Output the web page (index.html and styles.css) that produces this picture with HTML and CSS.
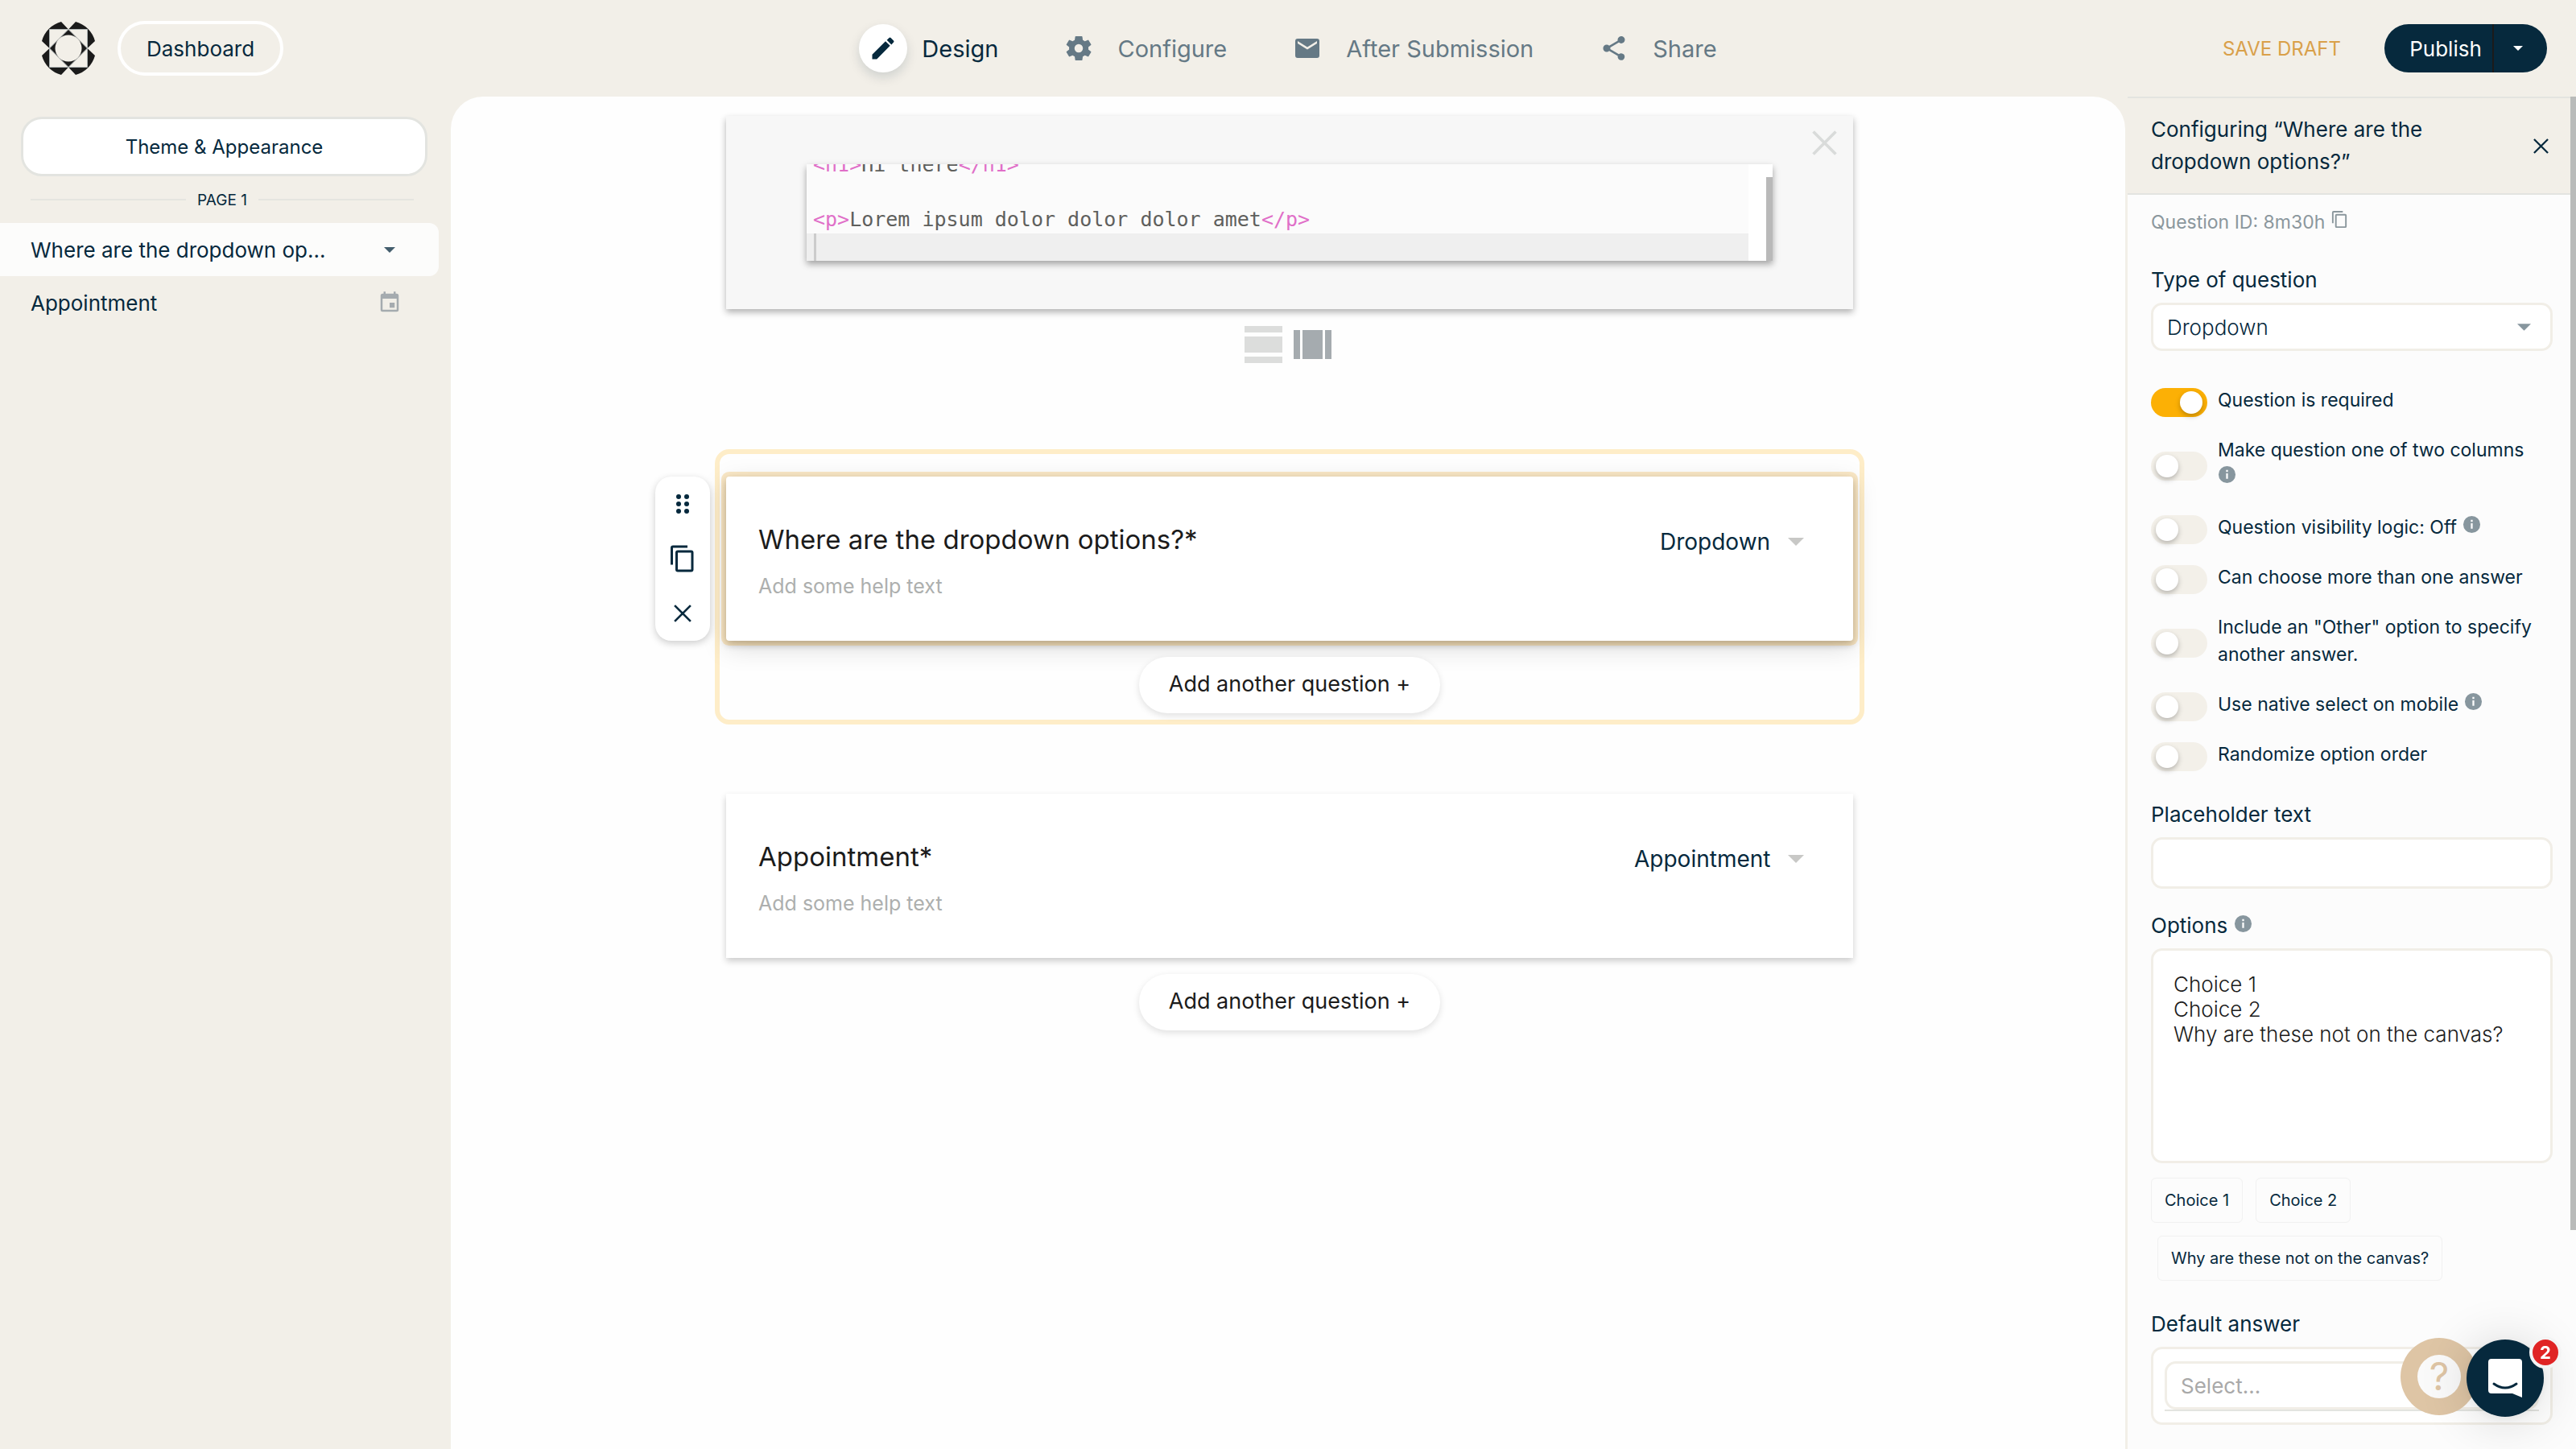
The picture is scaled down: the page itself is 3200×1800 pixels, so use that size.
FILE: index.html
```html
<!DOCTYPE html>
<html lang="en">
<head>
  <meta charset="UTF-8">
  <meta name="viewport" content="width=device-width, initial-scale=1.0">
  <title>Form Editor</title>
  <link rel="stylesheet" href="styles.css">
</head>
<body>
  <!-- shared icons -->
  <svg class="sprite" aria-hidden="true">
    <symbol id="caret" viewBox="0 0 20 10"><path d="M0 0h20L10 10z"/></symbol>
    <symbol id="info" viewBox="0 0 24 24"><path d="M12 1a11 11 0 1 0 0 22 11 11 0 0 0 0-22zm1.200 16.500h-2.400v-7h2.400zm0-9h-2.400V6h2.400z"/></symbol>
    <symbol id="copy" viewBox="0 0 24 24"><path d="M16 1H4a2 2 0 0 0-2 2v14h2V3h12zm3 4H8a2 2 0 0 0-2 2v14a2 2 0 0 0 2 2h11a2 2 0 0 0 2-2V7a2 2 0 0 0-2-2zm0 16H8V7h11z"/></symbol>
    <symbol id="cross" viewBox="0 0 20 20"><path d="M1 1l18 18M19 1L1 19" fill="none" stroke="currentColor" stroke-width="2.400"/></symbol>
  </svg>

  <header class="topbar">
    <div class="topbar-left">
      <svg class="logo" viewBox="0 0 66 66">
        <path d="M24 0L33 9.500 42 0A34 34 0 0 1 66 24L56.500 33 66 42A34 34 0 0 1 42 66L33 56.500 24 66A34 34 0 0 1 0 42L9.500 33 0 24A34 34 0 0 1 24 0z" fill="#1b1b1b"/>
        <path d="M9.500 9.500h47v47h-47z" fill="#f2efe8"/>
        <path d="M33 9.500L56.500 33 33 56.500 9.500 33z" fill="#1b1b1b"/>
        <path d="M9.500 9.500h47v47h-47zM33 9.500L56.500 33 33 56.500 9.500 33z" fill="none" stroke="#aeb4b4" stroke-width="1"/>
        <circle cx="33" cy="33" r="16.500" fill="#f2efe8"/>
      </svg>
      <button class="dashboard-btn">Dashboard</button>
    </div>
    <nav class="steps">
      <a href="#" class="step active">
        <span class="step-icon"><svg viewBox="0 0 24 24"><path d="M3 17.200V21h3.800L17.800 9.900l-3.800-3.800zM20.700 7a1 1 0 0 0 0-1.400l-2.300-2.300a1 1 0 0 0-1.400 0l-1.900 1.900 3.800 3.800z"/></svg></span>
        Design
      </a>
      <a href="#" class="step">
        <span class="step-icon"><svg viewBox="0 0 24 24"><path d="M20 13a8 8 0 0 0 0-2l2.100-1.600a.5.5 0 0 0 .1-.7l-2-3.400a.5.5 0 0 0-.6-.2l-2.500 1a7 7 0 0 0-1.700-1L15 2.400a.5.500 0 0 0-.5-.4h-4.900a.5.500 0 0 0-.5.400L8.700 5.100a7 7 0 0 0-1.700 1l-2.500-1a.5.500 0 0 0-.6.200l-2 3.400a.5.500 0 0 0 .1.700L4.100 11a8 8 0 0 0 0 2L2 14.600a.5.500 0 0 0-.1.700l2 3.400a.5.500 0 0 0 .6.200l2.500-1a7 7 0 0 0 1.700 1l.4 2.700c0 .2.200.4.500.4h4.900c.2 0 .4-.2.500-.4l.4-2.700a7 7 0 0 0 1.700-1l2.500 1c.2.100.5 0 .6-.2l2-3.400a.5.500 0 0 0-.1-.7zM12 15.500a3.500 3.500 0 1 1 0-7 3.500 3.500 0 0 1 0 7z"/></svg></span>
        Configure
      </a>
      <a href="#" class="step">
        <span class="step-icon"><svg viewBox="0 0 24 24"><path d="M20 4H4a2 2 0 0 0-2 2v12a2 2 0 0 0 2 2h16a2 2 0 0 0 2-2V6a2 2 0 0 0-2-2zm0 4l-8 5-8-5V6l8 5 8-5z"/></svg></span>
        After Submission
      </a>
      <a href="#" class="step">
        <span class="step-icon"><svg viewBox="0 0 24 24"><path d="M18 16.100c-.8 0-1.400.3-2 .8l-7.100-4.200a3 3 0 0 0 0-1.400L16 7.200A3 3 0 1 0 15 5c0 .2 0 .5.100.7L8 9.800a3 3 0 1 0 0 4.400l7.100 4.200a2.900 2.900 0 1 0 2.900-2.300z"/></svg></span>
        Share
      </a>
    </nav>
    <div class="topbar-right">
      <button class="draft-btn">SAVE DRAFT</button>
      <div class="publish">
        <button class="publish-btn">Publish</button>
        <button class="publish-more" aria-label="More publish options"><svg><use href="#caret"/></svg></button>
      </div>
    </div>
  </header>

  <main class="editor">
    <aside class="sidebar">
      <button class="theme-btn">Theme &amp; Appearance</button>
      <div class="page-divider">PAGE 1</div>
      <a href="#" class="page-item selected">
        <span>Where are the dropdown op...</span>
        <svg class="item-caret"><use href="#caret"/></svg>
      </a>
      <a href="#" class="page-item">
        <span>Appointment</span>
        <svg class="item-icon" viewBox="0 0 24 24"><path d="M17 12h-5v5h5zM16 1v2H8V1H6v2H5a2 2 0 0 0-2 2v14a2 2 0 0 0 2 2h14a2 2 0 0 0 2-2V5a2 2 0 0 0-2-2h-1V1zm3 18H5V8h14z"/></svg>
      </a>
    </aside>

    <section class="canvas">
      <div class="code-card">
        <button class="code-close" aria-label="Close"><svg><use href="#cross"/></svg></button>
        <div class="code-box">
          <pre class="code"><span class="tag">&lt;h1&gt;</span>Hi there<span class="tag">&lt;/h1&gt;</span>

<span class="tag">&lt;p&gt;</span>Lorem ipsum dolor dolor dolor amet<span class="tag">&lt;/p&gt;</span></pre>
          <div class="code-line"></div>
          <div class="code-scroll"></div>
        </div>
      </div>
      <div class="layouts">
        <button class="layout-btn rows" aria-label="Stacked"><i></i><i></i><i></i></button>
        <button class="layout-btn cols" aria-label="Full width"><i></i><i></i><i></i></button>
      </div>

      <div class="block active">
        <div class="tools">
          <button aria-label="Move"><svg class="dots" viewBox="0 0 16 24"><circle cx="3" cy="3" r="3"/><circle cx="13" cy="3" r="3"/><circle cx="3" cy="12" r="3"/><circle cx="13" cy="12" r="3"/><circle cx="3" cy="21" r="3"/><circle cx="13" cy="21" r="3"/></svg></button>
          <button aria-label="Duplicate"><svg class="copy"><use href="#copy"/></svg></button>
          <button aria-label="Delete"><svg class="cross"><use href="#cross"/></svg></button>
        </div>
        <article class="card">
          <div class="card-text">
            <h2>Where are the dropdown options?*</h2>
            <input type="text" placeholder="Add some help text" aria-label="Help text">
          </div>
          <label class="card-type">
            <select aria-label="Question type"><option>Dropdown</option></select>
            <svg><use href="#caret"/></svg>
          </label>
        </article>
        <button class="add-btn">Add another question +</button>
      </div>

      <div class="block">
        <article class="card">
          <div class="card-text">
            <h2>Appointment*</h2>
            <input type="text" placeholder="Add some help text" aria-label="Help text">
          </div>
          <label class="card-type">
            <select aria-label="Question type"><option>Appointment</option></select>
            <svg><use href="#caret"/></svg>
          </label>
        </article>
        <button class="add-btn">Add another question +</button>
      </div>
    </section>

    <aside class="panel">
      <div class="panel-head">
        <h1>Configuring “Where are the dropdown options?”</h1>
        <button class="panel-close" aria-label="Close"><svg><use href="#cross"/></svg></button>
      </div>
      <div class="panel-body">
        <p class="question-id">Question ID: 8m30h <svg><use href="#copy"/></svg></p>

        <label class="field-label" for="type">Type of question</label>
        <div class="select-wrap">
          <select id="type" class="field type-select"><option>Dropdown</option></select>
          <svg><use href="#caret"/></svg>
        </div>

        <div class="switches">
          <label class="switch"><input type="checkbox" checked><span>Question is required</span></label>
          <label class="switch"><input type="checkbox"><span>Make question one of two columns <svg class="info"><use href="#info"/></svg></span></label>
          <label class="switch"><input type="checkbox"><span>Question visibility logic: Off <svg class="info"><use href="#info"/></svg></span></label>
          <label class="switch"><input type="checkbox"><span>Can choose more than one answer</span></label>
          <label class="switch"><input type="checkbox"><span>Include an "Other" option to specify another answer.</span></label>
          <label class="switch"><input type="checkbox"><span>Use native select on mobile <svg class="info"><use href="#info"/></svg></span></label>
          <label class="switch"><input type="checkbox"><span>Randomize option order</span></label>
        </div>

        <label class="field-label" for="placeholder">Placeholder text</label>
        <input id="placeholder" class="field text-field" type="text">

        <label class="field-label" for="options">Options <svg class="info"><use href="#info"/></svg></label>
        <textarea id="options" class="field options-field">Choice 1
Choice 2
Why are these not on the canvas?</textarea>
        <div class="chips">
          <button>Choice 1</button>
          <button>Choice 2</button>
          <button class="long">Why are these not on the canvas?</button>
        </div>

        <label class="field-label" for="default">Default answer</label>
        <div class="field default-box">
          <div class="default-line">
            <select id="default" class="field default-select"><option>Select...</option></select>
          </div>
        </div>
      </div>
      <div class="scroll-thumb"></div>
    </aside>
  </main>

  <button class="help-btn" aria-label="Help"><span>?</span></button>
  <button class="chat-btn" aria-label="Messages">
    <svg viewBox="0 0 42 48"><path d="M4 0h34a4 4 0 0 1 4 4v44l-12-5H4a4 4 0 0 1-4-4V4a4 4 0 0 1 4-4z" fill="#fff"/><path d="M7 31q14 10 28 0" fill="none" stroke="#06293d" stroke-width="3" stroke-linecap="round"/></svg>
    <span class="badge">2</span>
  </button>
</body>
</html>
```
FILE: styles.css
```css
* {
  box-sizing: border-box;
}
body {
  margin: 0;
  height: 100vh;
  display: flex;
  flex-direction: column;
  overflow: hidden;
  background: #f2efe8;
  color: #06293d;
  font-family: Inter, sans-serif;
  font-size: 26px;
}
button, input, select, textarea {
  font: inherit;
  color: inherit;
  margin: 0;
}
button {
  border: none;
  background: none;
  padding: 0;
  cursor: pointer;
}
select {
  appearance: none;
}
a {
  color: inherit;
  text-decoration: none;
}
svg {
  fill: currentColor;
}
.sprite {
  display: none;
}

/* top bar */
.topbar {
  height: 120px;
  flex: none;
  display: grid;
  grid-template-columns: 1fr auto 1fr;
  align-items: center;
  padding: 0 36px;
}
.topbar-left {
  display: flex;
  align-items: center;
  gap: 28px;
  padding-left: 16px;
}
.logo {
  width: 66px;
  height: 66px;
}
.dashboard-btn {
  height: 68px;
  padding: 0 32px;
  border: 4px solid #fff;
  border-radius: 34px;
}
.steps {
  display: flex;
  gap: 70px;
  font-size: 29px;
}
.step {
  display: flex;
  align-items: center;
  gap: 18px;
  color: #657985;
}
.step-icon {
  width: 60px;
  height: 60px;
  border-radius: 50%;
  display: grid;
  place-items: center;
}
.step-icon svg {
  width: 36px;
  height: 36px;
}
.step.active {
  color: #06293d;
}
.step.active .step-icon {
  background: #fff;
  box-shadow: 0 6px 14px rgba(6, 41, 61, 0.15);
}
.topbar-right {
  display: flex;
  justify-content: flex-end;
  align-items: center;
  gap: 54px;
}
.draft-btn {
  color: #d9a04a;
  font-size: 24px;
}
.publish {
  display: flex;
  height: 60px;
  border-radius: 30px;
  overflow: hidden;
  background: #06293d;
  color: #fff;
}
.publish-btn {
  width: 136px;
  padding-left: 18px;
  border-right: 2px solid #1b1b1b;
}
.publish-more {
  width: 66px;
  padding-right: 6px;
}
.publish-more svg {
  width: 12px;
  height: 6px;
  display: block;
  margin: 0 auto;
}

/* three columns under the bar */
.editor {
  flex: 1;
  min-height: 0;
  display: grid;
  grid-template-columns: 560px 1fr 560px;
}

/* sidebar */
.sidebar {
  padding-top: 25px;
}
.theme-btn {
  display: block;
  width: 505px;
  height: 74px;
  margin-left: 26px;
  background: #fff;
  border: 3px solid #e3e4e0;
  border-radius: 26px;
  font-size: 24px;
}
.page-divider {
  display: flex;
  align-items: center;
  gap: 14px;
  height: 58px;
  padding: 0 46px 0 38px;
  font-size: 19px;
}
.page-divider::before, .page-divider::after {
  content: "";
  flex: 1;
  height: 2px;
  background: #e5e5e0;
}
.page-item {
  display: flex;
  align-items: center;
  justify-content: space-between;
  height: 66px;
  margin-right: 15px;
  padding: 0 48px 0 38px;
  border-radius: 0 12px 12px 0;
}
.page-item.selected {
  background: #fcfcfb;
}
.item-caret {
  width: 14px;
  height: 7px;
  margin-right: 6px;
  opacity: 0.75;
}
.item-icon {
  width: 30px;
  height: 30px;
  margin-right: -2px;
  color: #a5abaf;
}

/* canvas */
.canvas {
  min-width: 0;
  background: #fefefe;
  border-radius: 40px 40px 0 0;
  display: flex;
  flex-direction: column;
  align-items: center;
  padding: 24px 338px 0 342px;
}
.code-card {
  position: relative;
  width: 100%;
  height: 240px;
  padding: 60px 100px;
  background: #f7f7f7;
  box-shadow: 0 4px 8px rgba(0, 0, 0, 0.3);
}
.code-close {
  position: absolute;
  top: 18px;
  right: 20px;
  color: #d9dbda;
}
.code-close svg {
  width: 31px;
  height: 31px;
  display: block;
}
.code-box {
  position: relative;
  height: 120px;
  display: flex;
  flex-direction: column;
  justify-content: flex-end;
  overflow: hidden;
  background: #fbfbfb;
}
.code-box::after {
  content: "";
  position: absolute;
  top: 0;
  bottom: 0;
  right: 0;
  width: 30px;
  background: #fff;
}
.code-card::after {
  content: "";
  position: absolute;
  inset: 60px 100px;
  box-shadow: 0 4px 8px rgba(0, 0, 0, 0.35);
  pointer-events: none;
}
.code {
  margin: 0;
  padding-left: 8px;
  font-family: "DejaVu Sans Mono", monospace;
  font-size: 25px;
  line-height: 34px;
  color: #5f605d;
}
.tag {
  color: #e06fc8;
}
.code-line {
  flex: none;
  height: 34px;
  margin-right: 30px;
  background: #efefef;
  border-left: 9px solid #efefef;
}
.code-line::before {
  content: "";
  display: block;
  width: 3px;
  height: 100%;
  background: #ccc;
}
.code-scroll {
  position: absolute;
  z-index: 1;
  right: 0;
  bottom: 0;
  width: 8px;
  height: 104px;
  background: #b9b9b9;
}
.layouts {
  display: flex;
  align-items: center;
  gap: 14px;
  height: 46px;
  margin: 21px 0 107px;
  padding-right: 4px;
}
.layout-btn {
  display: grid;
  width: 47px;
}
.rows {
  height: 46px;
  grid-template-rows: 8px 20px 8px;
  gap: 5px;
}
.rows i {
  background: #dcdddc;
}
.cols {
  height: 36px;
  grid-template-columns: 8px 1fr 8px;
  gap: 3px;
}
.cols i {
  background: #a5abaf;
}
.block {
  position: relative;
  width: 100%;
  display: flex;
  flex-direction: column;
  align-items: center;
  gap: 20px;
}
.block.active {
  width: calc(100% + 28px);
  margin-bottom: 86px;
  padding: 28px 8px 8px;
  border: 6px solid #feedc8;
  border-radius: 18px;
}
.card {
  width: 100%;
  height: 204px;
  display: flex;
  justify-content: space-between;
  padding: 56px 60px 0 40px;
  background: #fff;
  box-shadow: 0 4px 8px rgba(0, 0, 0, 0.2);
}
.active .card {
  border-radius: 4px;
  box-shadow: 0 0 0 6px rgba(240, 180, 70, 0.3), 0 4px 10px rgba(0, 0, 0, 0.3), 0 8px 32px rgba(0, 0, 0, 0.15);
}
.card-text {
  flex: 1;
}
.card h2 {
  margin: 0 0 18px;
  font-size: 33px;
  font-weight: 400;
  line-height: 44px;
  color: #1b1b1b;
}
.card input {
  display: block;
  width: 100%;
  height: 36px;
  padding: 0;
  border: none;
  background: none;
  font-size: 25px;
}
.card input::placeholder {
  color: #adafae;
}
.card-type {
  display: flex;
  align-items: center;
  gap: 20px;
  height: 50px;
  font-size: 28px;
}
.card-type select {
  border: none;
  background: none;
  padding: 0;
}
.card-type svg {
  width: 22px;
  height: 10px;
  color: #c8c8c6;
}
.add-btn {
  position: relative;
  height: 70px;
  padding: 0 37px 4px;
  border-radius: 35px;
  background: #fff;
  color: #1b1b1b;
  font-size: 27px;
  box-shadow: 0 3px 8px rgba(0, 0, 0, 0.12);
}
.tools {
  position: absolute;
  top: 28px;
  left: -80px;
  width: 68px;
  height: 204px;
  display: grid;
  grid-auto-rows: 1fr;
  place-items: center;
  background: #fff;
  border-radius: 20px;
  box-shadow: 0 3px 10px rgba(0, 0, 0, 0.2);
}
.tools svg {
  display: block;
}
.tools .dots {
  width: 16px;
  height: 24px;
}
.tools .copy {
  width: 36px;
  height: 36px;
}
.tools .cross {
  width: 22px;
  height: 22px;
}

/* settings panel */
.panel {
  position: relative;
  min-height: 0;
  overflow: hidden;
  background: #fcfcfc;
  border-left: 3px solid #f2efe8;
}
.panel-head {
  display: flex;
  align-items: center;
  justify-content: space-between;
  height: 122px;
  padding: 0 34px 0 29px;
  background: #f2efe8;
  border-top: 2px solid #e3e4e0;
  border-bottom: 2px solid #e3e4e0;
}
.panel-head h1 {
  margin: 0;
  width: 400px;
  font-size: 26px;
  font-weight: 400;
  line-height: 40px;
}
.panel-close svg {
  width: 19px;
  height: 19px;
  display: block;
}
.panel-body {
  padding: 16px 29px 0;
}
.question-id {
  margin: 0 0 36px;
  line-height: 36px;
  font-size: 23px;
  color: #8b979d;
}
.question-id svg {
  width: 23px;
  height: 23px;
}
.field-label {
  display: block;
  line-height: 36px;
  margin-bottom: 10px;
}
.field {
  display: block;
  width: 100%;
  background: #fff;
  border: 3px solid #f1eee7;
  border-radius: 14px;
}
.select-wrap {
  position: relative;
}
.select-wrap svg {
  position: absolute;
  top: 26px;
  right: 27px;
  width: 17px;
  height: 9px;
  color: #87969e;
}
.type-select {
  height: 60px;
  padding: 0 17px;
  font-weight: 300;
}
.switches {
  margin: 44px 0 40px;
  display: flex;
  flex-direction: column;
  gap: 28px;
}
.switch {
  display: grid;
  grid-template-columns: 70px 1fr;
  gap: 13px;
  align-items: center;
  padding-right: 14px;
  font-size: 23px;
  line-height: 34px;
}
.switch input {
  appearance: none;
  width: 70px;
  height: 36px;
  margin: 2px 0 -4px;
  padding: 4px 6px;
  border-radius: 18px;
  background: #f3f0e9;
}
.switch input::before {
  content: "";
  display: block;
  width: 28px;
  height: 28px;
  border-radius: 50%;
  background: #fff;
  box-shadow: 0 3px 6px rgba(0, 0, 0, 0.25);
}
.switch input:checked {
  background: #fcb005;
}
.switch input:checked::before {
  margin-left: 30px;
}
.info {
  width: 23px;
  height: 23px;
  color: #87969e;
}
.text-field {
  height: 64px;
  margin-bottom: 28px;
}
.options-field {
  height: 267px;
  padding: 26px 25px;
  resize: none;
  font-weight: 300;
  line-height: 31px;
  color: #1b1b1b;
}
.chips {
  display: flex;
  flex-wrap: wrap;
  gap: 16px;
  margin: 18px 0 36px;
  font-size: 20px;
}
.chips button {
  height: 56px;
  padding: 0 16px;
  border: 1px solid #f1f1f1;
  border-radius: 6px;
}
.chips .long {
  margin-left: 8px;
}
.default-box {
  height: 97px;
  padding: 15px 14px;
}
.default-line {
  border-bottom: 2px solid #e3e4e0;
}
.default-select {
  height: 60px;
  padding: 0 17px;
  color: #a9a9a9;
}
.scroll-thumb {
  position: absolute;
  top: 0;
  right: 0;
  width: 7px;
  height: 1408px;
  background: #b9bbba;
}

/* floating buttons */
.help-btn, .chat-btn {
  position: fixed;
  width: 96px;
  height: 96px;
  border-radius: 50%;
  display: grid;
  place-items: center;
}
.help-btn {
  right: 122px;
  bottom: 42px;
  background: #dec5a5;
}
.help-btn span {
  width: 54px;
  height: 54px;
  border-radius: 50%;
  background: #fafafa;
  color: #dec5a5;
  font-size: 48px;
  line-height: 54px;
}
.chat-btn {
  right: 40px;
  bottom: 40px;
  background: #06293d;
  box-shadow: 0 2px 12px rgba(0, 0, 0, 0.06), 0 4px 64px rgba(0, 0, 0, 0.16);
}
.chat-btn svg {
  width: 42px;
  height: 48px;
}
.badge {
  position: absolute;
  top: -4px;
  right: -22px;
  width: 40px;
  height: 40px;
  border: 4px solid #f4f4f4;
  border-radius: 50%;
  background: #e02424;
  color: #fff;
  font-size: 22px;
  font-weight: 700;
  line-height: 32px;
}
```
